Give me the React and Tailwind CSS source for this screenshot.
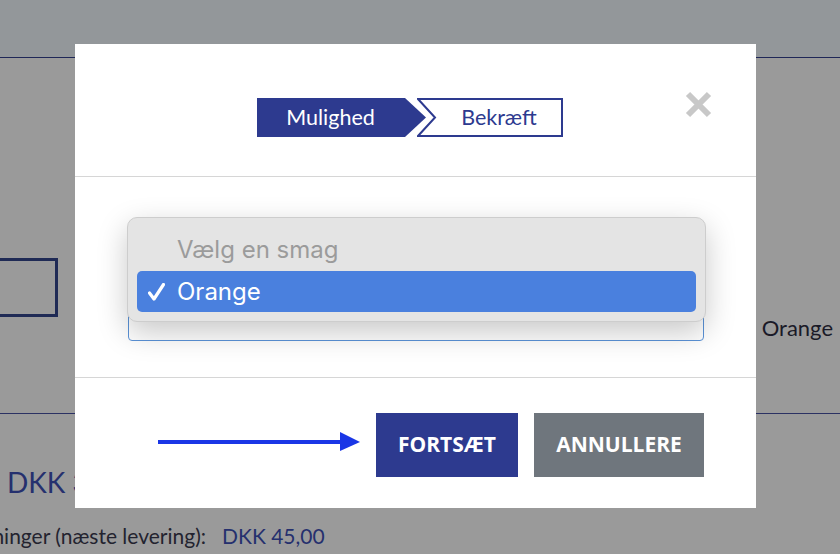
const navy = '#2d3a8f';

const Stepper = () => (
  <div className="flex h-[40px] font-['Lato',sans-serif] text-[21.5px] leading-[26px]">
    <div className="relative flex h-[40px] w-[169px] items-center">
      <svg className="absolute inset-0" width="169" height="40" viewBox="0 0 169 40">
        <polygon points="0,0 148,0 169,19.5 148,39 0,39" fill={navy} />
      </svg>
      <span className="relative -mt-[3px] w-[148px] text-center text-white">Mulighed</span>
    </div>
    <div className="relative -ml-[9px] flex h-[40px] w-[147px] items-center">
      <svg className="absolute inset-0" width="147" height="40" viewBox="0 0 147 40">
        <polygon points="1,1 145,1 145,38 1,38 18,19.5" fill="white" stroke={navy} strokeWidth="2" />
      </svg>
      <span className="relative -mt-[3px] w-[147px] pl-[18px] text-center text-[#2d3a8f]">Bekræft</span>
    </div>
  </div>
);

const CloseIcon = () => (
  <svg width="27" height="27" viewBox="0 0 27 27">
    <path d="M3 3 L24 24 M24 3 L3 24" stroke="#c8c8c8" strokeWidth="6" />
  </svg>
);

const Arrow = () => (
  <svg width="202" height="20" viewBox="0 0 202 20">
    <rect x="0" y="8" width="184" height="4" fill="#1a36e6" />
    <polygon points="182,0 202,10 182,19" fill="#1a36e6" />
  </svg>
);

const Dropdown = () => (
  <div className="absolute left-[52px] top-[173px] h-[105px] w-[579px] rounded-[10px] border border-[#cdcdcd] bg-[#e4e4e4] px-[9px] pt-[10px] font-['Inter',sans-serif] text-[24px] shadow-[0_10px_30px_rgba(0,0,0,0.22)]">
    <div className="flex h-[43px] items-center pl-[40px] text-[#9b9b9b]">Vælg en smag</div>
    <div className="flex h-[41px] items-center gap-[12px] rounded-[5px] bg-[#4a80de] pl-[11px] text-white">
      <svg width="17" height="18" viewBox="0 0 17 18">
        <path d="M1.5 10 L6 16 L15.5 1.5" fill="none" stroke="white" strokeWidth="3.2" strokeLinecap="round" strokeLinejoin="round" />
      </svg>
      <span>Orange</span>
    </div>
  </div>
);

const Modal = () => (
  <div className="absolute left-[75px] top-[44px] h-[464px] w-[681px] bg-white">
    <div className="relative flex h-[133px] justify-center border-b border-[#d6d6d6] pr-[11px] pt-[54px]">
      <Stepper />
      <button className="absolute right-[44px] top-[47px]">
        <CloseIcon />
      </button>
    </div>
    <div className="flex h-[201px] flex-col justify-end border-b border-[#d6d6d6] pb-[36px] pl-[53px] pr-[52px]">
      <div className="h-[48px] w-[576px] rounded-[4px] border border-[#5b93d8] bg-white" />
    </div>
    <div className="flex items-start justify-end gap-[16px] pr-[52px] pt-[35px] font-['Open_Sans',sans-serif] text-[21px] font-bold text-white">
      <div className="mt-[19px]">
        <Arrow />
      </div>
      <button className="h-[64px] w-[142px] bg-[#2d3a8f]">FORTSÆT</button>
      <button className="h-[64px] w-[170px] bg-[#6f767d]">ANNULLERE</button>
    </div>
    <Dropdown />
  </div>
);

export default function App() {
  return (
    <div className="relative h-[554px] w-[840px] overflow-hidden bg-[#9a9a9a] font-['Lato',sans-serif]">
      <div className="h-[58px] border-b border-[#1f2757] bg-[#93979a]" />
      <div className="flex h-[356px] items-start justify-between border-b border-[#2b3163]">
        <div className="-ml-[10px] mt-[200px] h-[59px] w-[68px] border-[3px] border-[#1f2a55]" />
        <div className="mr-[7px] mt-[256px] text-[22px] leading-[28px] text-[#1a1a28]">Orange</div>
      </div>
      <div className="mt-[51px] pl-[7px] text-[28px] leading-[34px] text-[#25306e]">DKK 349,00</div>
      <div className="mt-[24px] flex items-center text-[21px] leading-[26px]">
        <div className="flex w-[206px] justify-end whitespace-nowrap text-[#23232f]">Leveringsomkostninger (næste levering):</div>
        <div className="ml-[16px] text-[#25306e]">DKK 45,00</div>
      </div>
      <Modal />
    </div>
  );
}
